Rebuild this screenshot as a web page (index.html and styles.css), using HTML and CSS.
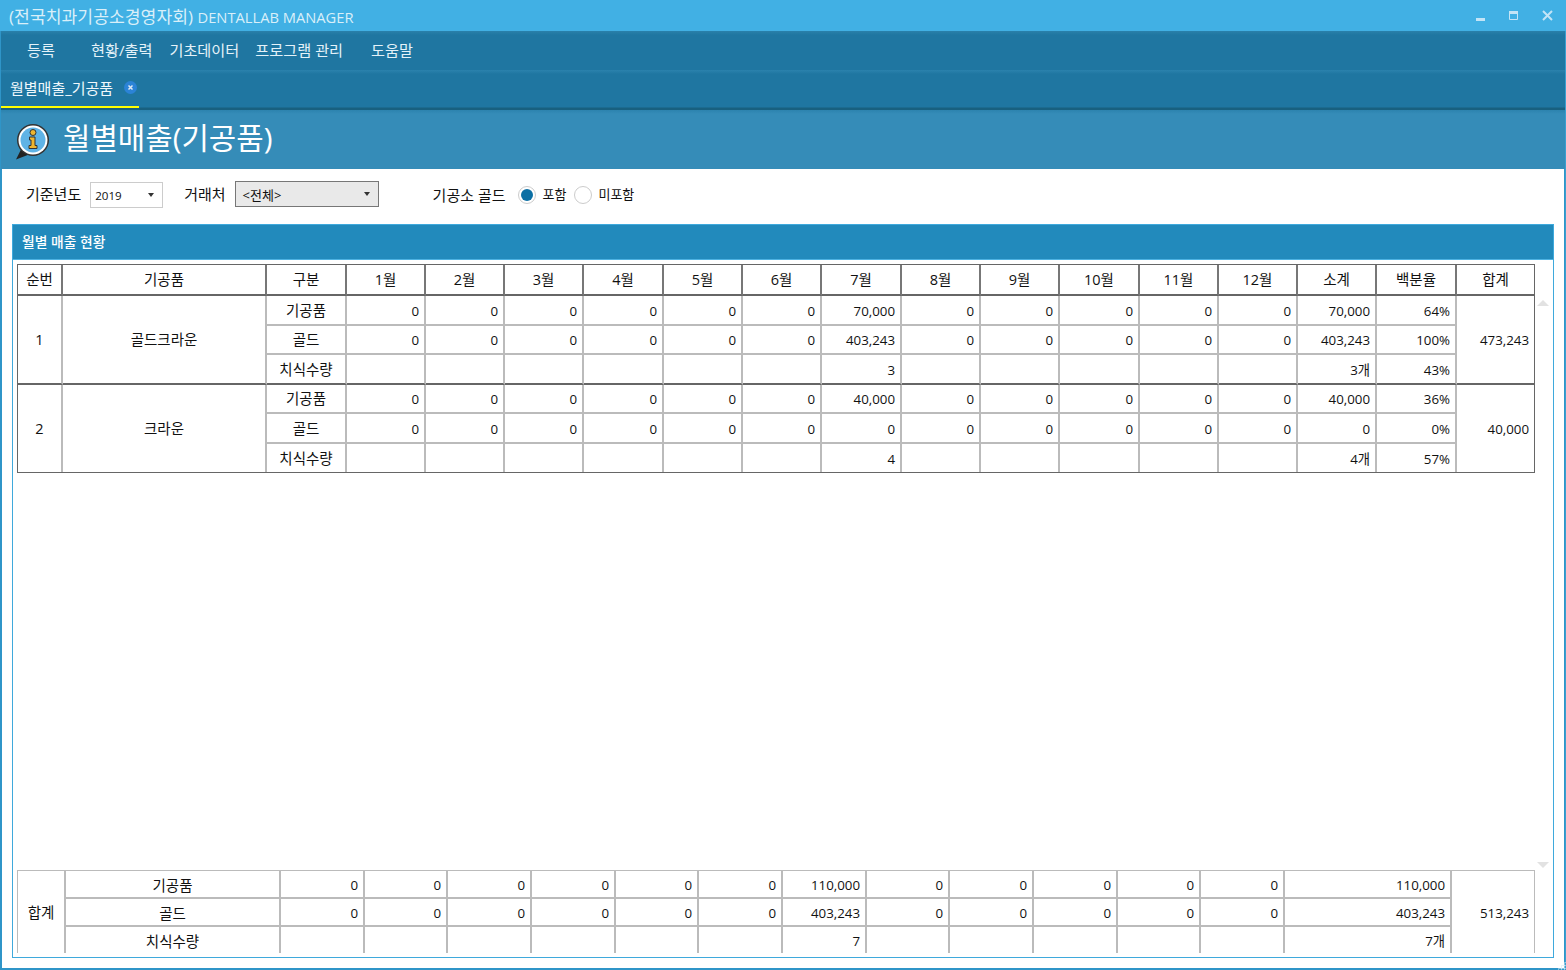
FILE: index.html
```html
<!DOCTYPE html>
<html lang="ko">
  <head>
    <meta charset="utf-8">
    <title>월별매출(기공품)</title>
    <link rel="stylesheet" href="styles.css">
  </head>
  <body>
    <div class="window">
      <div class="titlebar">
        <span class="app-name">(전국치과기공소경영자회) <span class="app-latin">DENTALLAB MANAGER</span></span>
        <div class="win-buttons">
          <svg width="9" height="3" viewBox="0 0 9 3"><rect width="9" height="3" fill="#c3e4f6"/></svg>
          <svg width="9" height="9" viewBox="0 0 9 9"><path d="M.5.5h8v8h-8z" fill="none" stroke="#c3e4f6"/><rect width="9" height="3" fill="#c3e4f6"/></svg>
          <svg width="11" height="11" viewBox="0 0 11 11"><path d="M1 1l9 9M10 1l-9 9" stroke="#c3e4f6" stroke-width="2"/></svg>
        </div>
      </div>

      <nav class="menu">
        <span class="menu-item m1">등록</span>
        <span class="menu-item m2">현황/출력</span>
        <span class="menu-item m3">기초데이터</span>
        <span class="menu-item m4">프로그램 관리</span>
        <span class="menu-item m5">도움말</span>
      </nav>

      <div class="tabbar">
        <div class="tab">
          <span>월별매출_기공품</span>
          <svg class="tab-close" width="13" height="13" viewBox="0 0 13 13"><circle cx="6.500" cy="6.500" r="6.500" fill="#2b83d6"/><path d="M4.500 4.500l4 4M8.500 4.500l-4 4" stroke="#dfe9f2" stroke-width="1.500"/></svg>
        </div>
      </div>

      <header class="page-head">
        <svg class="info-icon" width="36" height="37" viewBox="0 0 36 37">
          <path d="M1 36.500l5-10 8 5z" fill="#222"/>
          <circle cx="18" cy="17" r="16" fill="#333"/>
          <circle cx="18" cy="17" r="14.500" fill="#fff"/>
          <circle cx="18" cy="17" r="12.500" fill="#5fb3e6"/>
          <circle cx="18" cy="9.500" r="3" fill="#eeb52f" stroke="#333"/>
          <path d="M14.500 14h5.500v8.500h2v3h-8v-3h2v-5.500h-1.500z" fill="#eeb52f" stroke="#333"/>
        </svg>
        <h1>월별매출(기공품)</h1>
      </header>

      <main class="content">
        <div class="filters">
          <label class="f-label f-year">기준년도</label>
          <div class="select select-year"><span>2019</span><i class="caret"></i></div>
          <label class="f-label f-client">거래처</label>
          <div class="select select-client"><span>&lt;전체&gt;</span><i class="caret"></i></div>
          <label class="f-label f-gold">기공소 골드</label>
          <span class="radio on"></span><span class="radio-text t1">포함</span>
          <span class="radio"></span><span class="radio-text">미포함</span>
        </div>

        <section class="panel">
          <div class="panel-head">월별 매출 현황</div>
          <div class="panel-body">
            <div class="scroll-area">
              <table class="grid main-grid">
                <colgroup>
                  <col style="width:45px"><col style="width:204px"><col style="width:80px">
                  <col style="width:79px"><col style="width:79px"><col style="width:79px"><col style="width:80px">
                  <col style="width:79px"><col style="width:79px"><col style="width:80px"><col style="width:79px">
                  <col style="width:79px"><col style="width:80px"><col style="width:79px"><col style="width:79px">
                  <col style="width:79px"><col style="width:80px"><col style="width:77px">
                </colgroup>
                <thead>
                  <tr>
                    <th>순번</th><th>기공품</th><th>구분</th>
                    <th>1월</th><th>2월</th><th>3월</th><th>4월</th><th>5월</th><th>6월</th>
                    <th>7월</th><th>8월</th><th>9월</th><th>10월</th><th>11월</th><th>12월</th>
                    <th>소계</th><th>백분율</th><th>합계</th>
                  </tr>
                </thead>
                <tbody>
                  <tr class="tall">
                    <td rowspan="3" class="c sep-dark">1</td><td rowspan="3" class="c sep-dark">골드크라운</td><td class="c">기공품</td>
                    <td>0</td><td>0</td><td>0</td><td>0</td><td>0</td><td>0</td><td>70,000</td><td>0</td><td>0</td><td>0</td><td>0</td><td>0</td><td>70,000</td><td>64%</td>
                    <td rowspan="3" class="sep-dark">473,243</td>
                  </tr>
                  <tr>
                    <td class="c">골드</td>
                    <td>0</td><td>0</td><td>0</td><td>0</td><td>0</td><td>0</td><td>403,243</td><td>0</td><td>0</td><td>0</td><td>0</td><td>0</td><td>403,243</td><td>100%</td>
                  </tr>
                  <tr class="tall group-end">
                    <td class="c">치식수량</td>
                    <td></td><td></td><td></td><td></td><td></td><td></td><td>3</td><td></td><td></td><td></td><td></td><td></td><td>3개</td><td>43%</td>
                  </tr>
                  <tr>
                    <td rowspan="3" class="c">2</td><td rowspan="3" class="c">크라운</td><td class="c">기공품</td>
                    <td>0</td><td>0</td><td>0</td><td>0</td><td>0</td><td>0</td><td>40,000</td><td>0</td><td>0</td><td>0</td><td>0</td><td>0</td><td>40,000</td><td>36%</td>
                    <td rowspan="3">40,000</td>
                  </tr>
                  <tr class="tall">
                    <td class="c">골드</td>
                    <td>0</td><td>0</td><td>0</td><td>0</td><td>0</td><td>0</td><td>0</td><td>0</td><td>0</td><td>0</td><td>0</td><td>0</td><td>0</td><td>0%</td>
                  </tr>
                  <tr class="last">
                    <td class="c">치식수량</td>
                    <td></td><td></td><td></td><td></td><td></td><td></td><td>4</td><td></td><td></td><td></td><td></td><td></td><td>4개</td><td>57%</td>
                  </tr>
                </tbody>
              </table>
              <i class="scroll-arrow up"></i>
              <i class="scroll-arrow down"></i>
            </div>

            <table class="grid total-grid">
              <colgroup>
                <col style="width:48px"><col style="width:215px">
                <col style="width:84px"><col style="width:83px"><col style="width:84px"><col style="width:84px">
                <col style="width:83px"><col style="width:84px"><col style="width:84px"><col style="width:83px">
                <col style="width:84px"><col style="width:84px"><col style="width:83px"><col style="width:84px">
                <col style="width:167px"><col style="width:82px">
              </colgroup>
              <tbody>
                <tr>
                  <td rowspan="3" class="c">합계</td><td class="c">기공품</td>
                  <td>0</td><td>0</td><td>0</td><td>0</td><td>0</td><td>0</td><td>110,000</td><td>0</td><td>0</td><td>0</td><td>0</td><td>0</td><td>110,000</td>
                  <td rowspan="3">513,243</td>
                </tr>
                <tr>
                  <td class="c">골드</td>
                  <td>0</td><td>0</td><td>0</td><td>0</td><td>0</td><td>0</td><td>403,243</td><td>0</td><td>0</td><td>0</td><td>0</td><td>0</td><td>403,243</td>
                </tr>
                <tr class="last">
                  <td class="c">치식수량</td>
                  <td></td><td></td><td></td><td></td><td></td><td></td><td>7</td><td></td><td></td><td></td><td></td><td></td><td>7개</td>
                </tr>
              </tbody>
            </table>
          </div>
        </section>
      </main>
      <i class="grip"></i>
    </div>
  </body>
</html>
```

FILE: styles.css
```css
* {
  box-sizing: border-box;
}
html, body {
  margin: 0;
  height: 100%;
  overflow: hidden;
}
body {
  font-family: "Open Sans", "Noto Sans CJK KR", sans-serif;
  font-size: 14px;
  color: #111;
}
.window {
  position: relative;
  width: 1566px;
  height: 970px;
  display: flex;
  flex-direction: column;
  background: #2f95c8;
  border-left: 1px solid #2f95c8;
  border-right: 1px solid #3a9fd0;
  border-bottom: 2px solid #2f95c8;
}

/* title bar */
.titlebar {
  height: 31px;
  margin: 0 -1px;
  padding: 0 0 0 9px;
  background: #41b0e4;
  color: #d9eff9;
  display: flex;
  align-items: center;
  justify-content: space-between;
  font-size: 17.200px;
  flex: none;
}
.app-latin {
  font-size: 14.700px;
}
.win-buttons {
  display: flex;
  align-items: center;
  gap: 24px;
  padding-right: 13px;
}
.win-buttons svg:first-child {
  margin-top: 8px;
}
.win-buttons svg {
  display: block;
}

/* menu */
.menu {
  height: 39px;
  flex: none;
  padding: 0 0 2px 26px;
  display: flex;
  align-items: center;
  color: #e4f2f9;
  font-size: 15.200px;
  background: linear-gradient(#2a80aa, #1f76a1 4px);
}
.menu-item {
  line-height: 20px;
}
.m2 { margin-left: 36px; }
.m3 { margin-left: 17px; }
.m4 { margin-left: 16px; }
.m5 { margin-left: 28px; }

/* tabs */
.tabbar {
  height: 40px;
  flex: none;
  background: linear-gradient(#2b82ad, #1f76a1 4px, #1f76a1 37px, #18607f 38px);
}
.tab {
  width: 138px;
  height: 38px;
  padding: 0 0 2px 9px;
  display: flex;
  align-items: center;
  color: #f0f8fc;
  font-size: 15px;
  border-bottom: 2px solid #ffff00;
}
.tab-close {
  margin-left: 11px;
  margin-top: 1px;
}

/* page head */
.page-head {
  height: 59px;
  flex: none;
  padding-left: 14px;
  display: flex;
  align-items: center;
  gap: 12px;
  background: linear-gradient(#2c83ae, #358cb8 4px);
}
.page-head h1 {
  margin: 0 0 3px;
  font-size: 29.800px;
  font-weight: 400;
  line-height: 40px;
  color: #fff;
}
.info-icon {
  margin-top: 3px;
}

/* content */
.content {
  flex: 1;
  min-height: 0;
  display: flex;
  flex-direction: column;
  margin: 0 1px 0 1px;
  padding: 12px 10px 10px 10px;
  background: #fff;
}
.filters {
  height: 43px;
  flex: none;
  padding-left: 14px;
  display: flex;
  align-items: flex-start;
}
.f-label {
  font-size: 15px;
  line-height: 26px;
}
.select {
  height: 26px;
  display: flex;
  align-items: center;
  justify-content: space-between;
  font-size: 11.600px;
  padding: 0 8px 0 4px;
  border: 1px solid #ccc;
  background: #fff;
}
.select-year {
  width: 73px;
  margin-left: 9px;
  margin-top: 1px;
}
.f-client {
  margin-left: 21px;
}
.select-client {
  width: 144px;
  margin-left: 9px;
  padding-left: 7px;
  font-size: 13px;
  border-color: #777;
  background: #e9e9e9;
}
.f-gold {
  margin-left: 54px;
  margin-top: 1px;
}
.caret {
  width: 0;
  height: 0;
  border-left: 3px solid transparent;
  border-right: 3px solid transparent;
  border-top: 4px solid #333;
}
.radio {
  width: 18px;
  height: 18px;
  margin: 5px 0 0 12px;
  border-radius: 50%;
  border: 1px solid #ccc;
  background: #fff;
  display: flex;
  align-items: center;
  justify-content: center;
}
.radio.on::after {
  content: "";
  width: 12px;
  height: 12px;
  border-radius: 50%;
  background: #0b6fa4;
}
.radio-text {
  margin-left: 6px;
  font-size: 13px;
  line-height: 26px;
}
.radio-text.t1 {
  margin-left: 7px;
  margin-right: -4px;
}

/* panel */
.panel {
  flex: 1;
  min-height: 0;
  display: flex;
  flex-direction: column;
  border: 1px solid #3fa9dc;
}
.panel-head {
  height: 35px;
  flex: none;
  padding: 0 0 3px 9px;
  display: flex;
  align-items: center;
  color: #fff;
  font-size: 13.800px;
  font-weight: 500;
  background: #228abc;
  border-bottom: 1px solid #4db2e2;
}
.panel-body {
  flex: 1;
  min-height: 0;
  display: flex;
  flex-direction: column;
  padding: 4px;
}
.scroll-area {
  position: relative;
  flex: 1;
  min-height: 0;
}
.scroll-arrow {
  position: absolute;
  right: 0;
  width: 0;
  height: 0;
  border-left: 6px solid transparent;
  border-right: 6px solid transparent;
}
.scroll-arrow.up {
  top: 36px;
  border-bottom: 6px solid #e2e2e2;
}
.scroll-arrow.down {
  bottom: 2px;
  border-top: 6px solid #e2e2e2;
}

/* grids */
.grid {
  table-layout: fixed;
  width: 1518px;
  border-collapse: separate;
  border-spacing: 0;
  font-size: 13.300px;
}
.grid th, .grid td {
  padding: 1px 5px 0 0;
  line-height: 20px;
  text-align: right;
  white-space: nowrap;
  overflow: hidden;
  border-right: 2px solid #bbb;
  border-bottom: 2px solid #bbb;
}
.grid th:last-child, .grid td[rowspan]:last-child {
  border-right: 0;
}
.grid .c, .grid th {
  padding: 0;
  text-align: center;
  font-size: 14.500px;
  font-weight: 400;
}
.grid td.c {
  padding-top: 1px;
}
.grid td.c[rowspan] {
  padding-top: 0;
}
.main-grid {
  border: 1px solid #666;
}
.main-grid thead tr {
  height: 31px;
}
.main-grid th {
  border-right-color: #777;
  border-bottom-color: #666;
}
.main-grid tbody tr {
  height: 29px;
}
.main-grid tbody tr.tall {
  height: 30px;
}
.main-grid tbody tr.last {
  height: 28px;
}
.main-grid tr.group-end td, .main-grid td.sep-dark {
  border-bottom-color: #666;
}
.grid tr.last td, .main-grid tbody tr:nth-child(4) td[rowspan] {
  border-bottom: 0;
}
.total-grid {
  flex: none;
  border: 1px solid #bbb;
  border-bottom: 0;
}
.total-grid tr {
  height: 28px;
}
.total-grid tr.last {
  height: 26px;
}
.total-grid td {
  padding-top: 2px;
}
.total-grid td.c {
  padding-top: 3px;
}
.total-grid td[rowspan], .total-grid td.c[rowspan] {
  padding-top: 1px;
  border-bottom: 0;
}

.grip {
  position: absolute;
  right: -1px;
  bottom: -2px;
  width: 9px;
  height: 9px;
  background: radial-gradient(circle, #cfe8f5 45%, transparent 50%) 0 0 / 3px 3px;
  clip-path: polygon(100% 0, 100% 100%, 0 100%);
}
```
